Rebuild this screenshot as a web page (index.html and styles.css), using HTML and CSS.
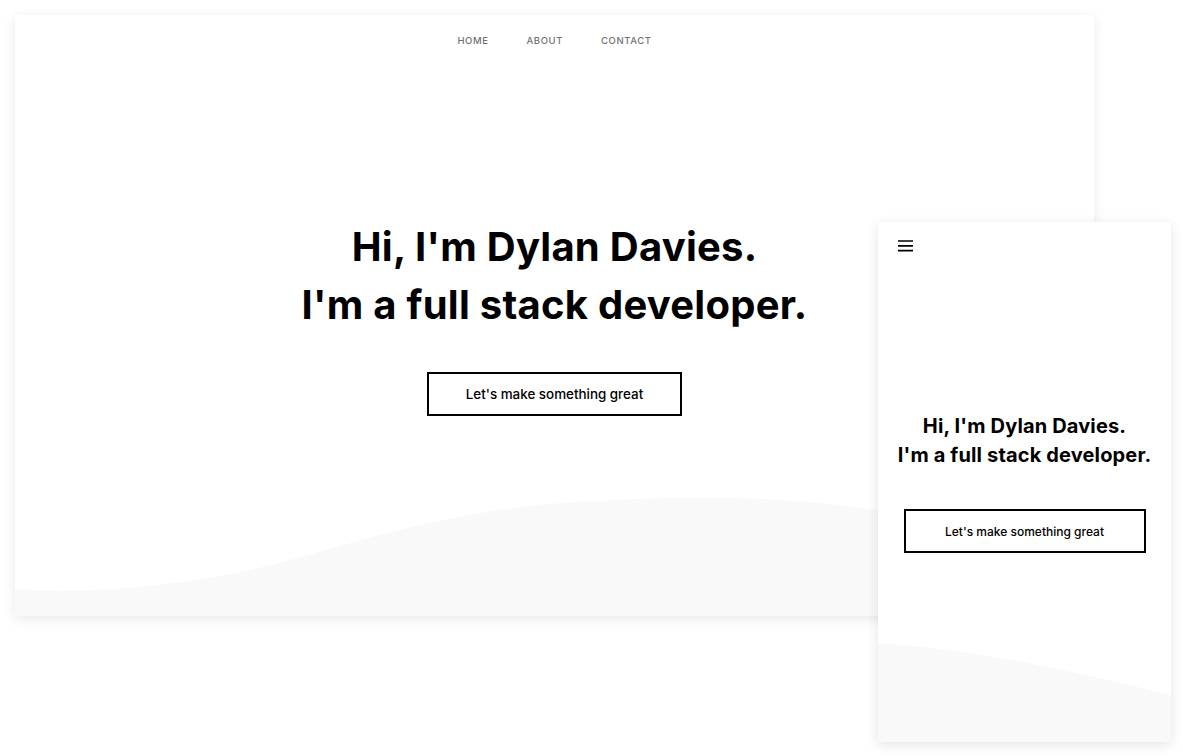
FILE: index.html
```html
<!DOCTYPE html>
<html lang="en">
<head>
<meta charset="utf-8">
<title>Dylan Davies</title>
<link rel="stylesheet" href="styles.css">
</head>
<body>
<div class="stage">
  <section class="window window-desktop">
    <nav class="nav">
      <a class="nav-link" href="#">Home</a>
      <a class="nav-link" href="#">About</a>
      <a class="nav-link" href="#">Contact</a>
    </nav>
    <div class="hero hero-desktop">
      <h1 class="headline headline-desktop">Hi, I'm Dylan Davies.<br>I'm a full stack developer.</h1>
      <a class="cta cta-desktop" href="#">Let's make something great</a>
    </div>
    <svg class="wave wave-desktop" viewBox="0 0 1079 140" preserveAspectRatio="none" aria-hidden="true">
      <path d="M0,113 C70,118 150,112 235,94 C330,72 430,30 585,25 C680,19 760,20 863,34 C950,46 1020,60 1079,70 L1079,140 L0,140 Z"/>
    </svg>
  </section>

  <section class="window window-mobile">
    <div class="menu-bar">
      <svg class="burger" viewBox="0 0 15 12" aria-hidden="true">
        <path d="M0,1 H15 M0,5.8 H15 M0,10.6 H15"/>
      </svg>
    </div>
    <div class="hero hero-mobile">
      <h1 class="headline headline-mobile">Hi, I'm Dylan Davies.<br>I'm a full stack developer.</h1>
      <a class="cta cta-mobile" href="#">Let's make something great</a>
    </div>
    <svg class="wave wave-mobile" viewBox="0 0 293 100" preserveAspectRatio="none" aria-hidden="true">
      <path d="M0,1 C100,8 200,30 293,53 L293,100 L0,100 Z"/>
    </svg>
  </section>
</div>
</body>
</html>
```

FILE: styles.css
```css
* { box-sizing: border-box; }

html, body {
  margin: 0;
  padding: 0;
  background: #ffffff;
}

body {
  font-family: "Inter", "Noto Sans", "Liberation Sans", sans-serif;
  color: #000;
}

.stage {
  position: relative;
  width: 1183px;
  height: 756px;
}

.window {
  position: absolute;
  background: #fff;
  overflow: hidden;
  display: flex;
  flex-direction: column;
}

.window-desktop {
  left: 15px;
  top: 15px;
  width: 1079px;
  height: 601px;
  box-shadow: 0 3px 12px rgba(0, 0, 0, 0.09);
}

.window-mobile {
  left: 878px;
  top: 222px;
  width: 293px;
  height: 520px;
  box-shadow: 0 3px 12px rgba(0, 0, 0, 0.11);
}

.nav {
  display: flex;
  justify-content: center;
  gap: 38px;
  padding-top: 18px;
  padding-left: 0;
}

.nav-link {
  font-size: 9.5px;
  line-height: 15px;
  letter-spacing: 0.6px;
  text-transform: uppercase;
  text-decoration: none;
  color: #717171;
  font-weight: 500;
}

.hero {
  position: relative;
  z-index: 1;
  display: flex;
  flex-direction: column;
  align-items: center;
}

.hero-desktop {
  padding-top: 170px;
}

.headline {
  margin: 0;
  font-weight: 700;
  text-align: center;
  color: #000;
}

.headline-desktop {
  font-size: 40px;
  line-height: 58px;
  letter-spacing: 0.25px;
}

.cta {
  display: flex;
  align-items: center;
  justify-content: center;
  border: 2px solid #000;
  color: #000;
  text-decoration: none;
  font-weight: 500;
  background: #fff;
}

.cta-desktop {
  margin-top: 38px;
  width: 255px;
  height: 44px;
  font-size: 13.4px;
}

.menu-bar {
  padding: 18px 0 0 20px;
  height: 30px;
}

.burger {
  display: block;
  width: 15px;
  height: 12px;
  stroke: #000;
  stroke-width: 1.7;
  fill: none;
}

.hero-mobile {
  padding-top: 160px;
}

.headline-mobile {
  font-size: 20px;
  line-height: 29px;
  letter-spacing: 0.15px;
}

.cta-mobile {
  margin-top: 39px;
  width: 242px;
  height: 44px;
  font-size: 12px;
}

.wave {
  position: absolute;
  left: 0;
  bottom: 0;
  width: 100%;
  fill: #f9f9f9;
}

.wave-desktop { height: 140px; }
.wave-mobile { height: 100px; }
```
